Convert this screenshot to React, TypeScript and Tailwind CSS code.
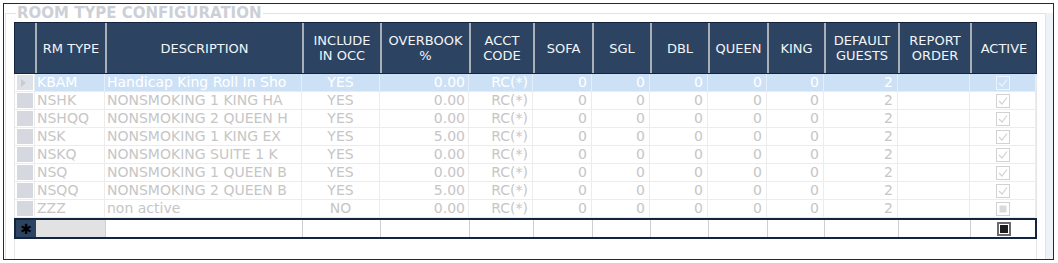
import React from 'react'

const COLS =
  'grid grid-cols-[20px_70px_197px_78px_89px_64px_59px_58px_58px_59px_57px_74px_72px_66px]'

const headers: string[][] = [
  [],
  ['RM TYPE'],
  ['DESCRIPTION'],
  ['INCLUDE', 'IN OCC'],
  ['OVERBOOK', '%'],
  ['ACCT', 'CODE'],
  ['SOFA'],
  ['SGL'],
  ['DBL'],
  ['QUEEN'],
  ['KING'],
  ['DEFAULT', 'GUESTS'],
  ['REPORT', 'ORDER'],
  ['ACTIVE'],
]

interface RoomType {
  code: string
  description: string
  includeInOcc: string
  overbook: string
  acct: string
  sofa: number
  sgl: number
  dbl: number
  queen: number
  king: number
  guests: number
  order: string
  active: boolean
}

const rooms: RoomType[] = [
  { code: 'KBAM', description: 'Handicap King Roll In Sho', includeInOcc: 'YES', overbook: '0.00', acct: 'RC(*)', sofa: 0, sgl: 0, dbl: 0, queen: 0, king: 0, guests: 2, order: '', active: true },
  { code: 'NSHK', description: 'NONSMOKING 1 KING HA', includeInOcc: 'YES', overbook: '0.00', acct: 'RC(*)', sofa: 0, sgl: 0, dbl: 0, queen: 0, king: 0, guests: 2, order: '', active: true },
  { code: 'NSHQQ', description: 'NONSMOKING 2 QUEEN H', includeInOcc: 'YES', overbook: '0.00', acct: 'RC(*)', sofa: 0, sgl: 0, dbl: 0, queen: 0, king: 0, guests: 2, order: '', active: true },
  { code: 'NSK', description: 'NONSMOKING 1 KING EX', includeInOcc: 'YES', overbook: '5.00', acct: 'RC(*)', sofa: 0, sgl: 0, dbl: 0, queen: 0, king: 0, guests: 2, order: '', active: true },
  { code: 'NSKQ', description: 'NONSMOKING SUITE 1 K', includeInOcc: 'YES', overbook: '0.00', acct: 'RC(*)', sofa: 0, sgl: 0, dbl: 0, queen: 0, king: 0, guests: 2, order: '', active: true },
  { code: 'NSQ', description: 'NONSMOKING 1 QUEEN B', includeInOcc: 'YES', overbook: '0.00', acct: 'RC(*)', sofa: 0, sgl: 0, dbl: 0, queen: 0, king: 0, guests: 2, order: '', active: true },
  { code: 'NSQQ', description: 'NONSMOKING 2 QUEEN B', includeInOcc: 'YES', overbook: '5.00', acct: 'RC(*)', sofa: 0, sgl: 0, dbl: 0, queen: 0, king: 0, guests: 2, order: '', active: true },
  { code: 'ZZZ', description: 'non active', includeInOcc: 'NO', overbook: '0.00', acct: 'RC(*)', sofa: 0, sgl: 0, dbl: 0, queen: 0, king: 0, guests: 2, order: '', active: false },
]

function CheckBox({ checked, light }: { checked: boolean; light?: boolean }) {
  const stroke = light ? '#eef4fb' : '#d2d2d2'
  return (
    <svg width="14" height="14" viewBox="0 0 14 14">
      <rect x="0.5" y="0.5" width="13" height="13" fill="none" stroke={stroke} />
      {checked ? (
        <polyline points="3,7 6,10 11,3.5" fill="none" stroke={stroke} strokeWidth="1.2" />
      ) : (
        <rect x="3.5" y="3.5" width="7" height="7" fill="#dadada" />
      )}
    </svg>
  )
}

export default function App() {
  return (
    <div className="w-[1058px] h-[263px] bg-white pl-[3px] pt-[3px] font-['DejaVu_Sans',sans-serif]">
      <div className="flex w-[1051px] h-[257px] border border-[#1b2a48] bg-white overflow-hidden">
        <fieldset className="ml-[1px] mt-[1px] w-[1041px] h-[280px] border border-[#dfe4ea] pl-[8px] pr-[7px] min-w-0">
          <legend className="ml-[2px] px-[1px] text-[15px] leading-[16px] font-bold text-[#ccd0d6]">
            ROOM TYPE CONFIGURATION
          </legend>
          <div className="mt-[1px] w-[1023px] h-[260px] border-x border-[#e6e6e6] bg-white">
            {/* Header */}
            <div className={`${COLS} -mx-px h-[52px] border border-[#132340] bg-[#2c4462] text-[13px] leading-[15px] text-[#f3f5f8]`}>
              {headers.map((lines, i) => (
                <div
                  key={i}
                  className={i === 0 ? '' : 'flex flex-col items-center justify-center text-center border-l-2 border-[#aab0b7]'}
                >
                  {lines.map((l) => (
                    <span key={l}>{l}</span>
                  ))}
                </div>
              ))}
            </div>

            {/* Rows */}
            {rooms.map((r, idx) => {
              const selected = idx === 0
              const cell = `border-r ${selected ? 'border-[#e4eefa]' : 'border-[#ececec]'} overflow-hidden whitespace-nowrap`
              return (
                <div
                  key={r.code}
                  className={`${COLS} h-[18px] border-b ${selected ? 'bg-[#cde1f6] text-white border-[#e4eefa]' : 'bg-white text-[#c6c6c6] border-[#ececec]'} text-[14px] leading-[17px]`}
                >
                  <div className="flex items-stretch py-[1px] pl-[2px] pr-[1px] border-r border-[#ececec] bg-white">
                    <div className={`flex-1 flex items-center ${selected ? 'bg-[#dde2e8]' : 'bg-[#d5d9df]'}`}>
                      {selected && (
                        <svg width="8" height="10" viewBox="0 0 8 10" className="ml-[3px]">
                          <polygon points="1,1 6,5 1,9" fill="#c7ccd3" />
                        </svg>
                      )}
                    </div>
                  </div>
                  <div className={`${cell} pl-[2px]`}>{r.code}</div>
                  <div className={`${cell} pl-[2px]`}>{r.description}</div>
                  <div className={`${cell} text-center`}>{r.includeInOcc}</div>
                  <div className={`${cell} text-right pr-[3px]`}>{r.overbook}</div>
                  <div className={`${cell} text-right pr-[4px]`}>{r.acct}</div>
                  <div className={`${cell} text-right pr-[4px]`}>{r.sofa}</div>
                  <div className={`${cell} text-right pr-[4px]`}>{r.sgl}</div>
                  <div className={`${cell} text-right pr-[4px]`}>{r.dbl}</div>
                  <div className={`${cell} text-right pr-[4px]`}>{r.queen}</div>
                  <div className={`${cell} text-right pr-[4px]`}>{r.king}</div>
                  <div className={`${cell} text-right pr-[4px]`}>{r.guests}</div>
                  <div className={cell}>{r.order}</div>
                  <div className={`${cell} flex items-center justify-center`}>
                    <CheckBox checked={r.active} light={selected} />
                  </div>
                </div>
              )
            })}

            {/* New row */}
            <div className={`${COLS} -mx-px h-[21px] border-2 border-[#14243f] bg-white`}>
              <div className="flex items-center justify-center bg-[#2c4462] text-[14px] leading-none text-black">✱</div>
              <div className="bg-[#e2e2e2] border-r border-[#cfcfcf]" />
              <div className="border-r border-[#cfcfcf]" />
              <div className="border-r border-[#cfcfcf]" />
              <div className="border-r border-[#cfcfcf]" />
              <div className="border-r border-[#cfcfcf]" />
              <div className="border-r border-[#cfcfcf]" />
              <div className="border-r border-[#cfcfcf]" />
              <div className="border-r border-[#cfcfcf]" />
              <div className="border-r border-[#cfcfcf]" />
              <div className="border-r border-[#cfcfcf]" />
              <div className="border-r border-[#cfcfcf]" />
              <div className="border-r border-[#cfcfcf]" />
              <div className="flex items-center justify-center">
                <div className="w-[14px] h-[14px] border-2 border-[#6b6b6b] bg-white p-[1px]">
                  <div className="w-full h-full bg-[#1e1e1e]" />
                </div>
              </div>
            </div>
          </div>
        </fieldset>
        <div className="mt-[9px] w-[7px] bg-[#eef3fa]" />
      </div>
    </div>
  )
}
